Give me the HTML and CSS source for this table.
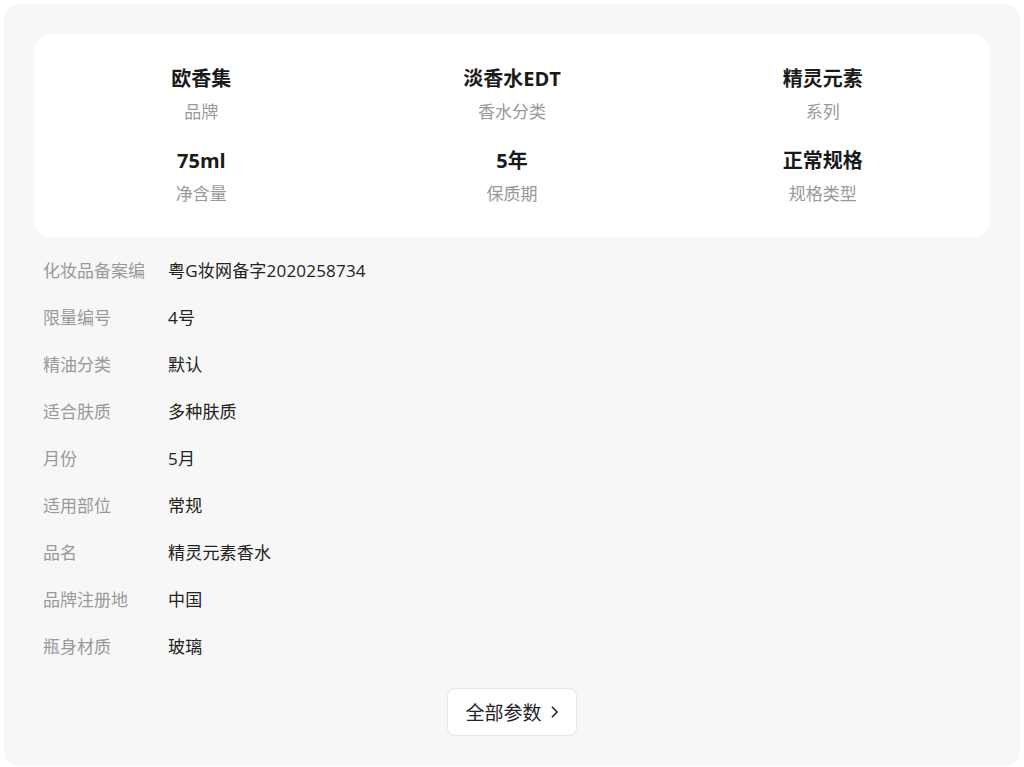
FILE: index.html
```html
<!DOCTYPE html>
<html lang="zh-CN">
<head>
    <meta charset="UTF-8">
    <meta name="viewport" content="width=device-width, initial-scale=1.0">
    <title>商品参数</title>
    <link rel="stylesheet" href="styles.css">
</head>
<body>
<div class="panel">
    <div class="summary">
        <div class="summary-item">
            <div class="summary-value">欧香集</div>
            <div class="summary-label">品牌</div>
        </div>
        <div class="summary-item">
            <div class="summary-value">淡香水EDT</div>
            <div class="summary-label">香水分类</div>
        </div>
        <div class="summary-item">
            <div class="summary-value">精灵元素</div>
            <div class="summary-label">系列</div>
        </div>
        <div class="summary-item">
            <div class="summary-value">75ml</div>
            <div class="summary-label">净含量</div>
        </div>
        <div class="summary-item">
            <div class="summary-value">5年</div>
            <div class="summary-label">保质期</div>
        </div>
        <div class="summary-item">
            <div class="summary-value">正常规格</div>
            <div class="summary-label">规格类型</div>
        </div>
    </div>

    <div class="params">
        <div class="param-row"><span class="param-name">化妆品备案编</span><span class="param-value">粤G妆网备字2020258734</span></div>
        <div class="param-row"><span class="param-name">限量编号</span><span class="param-value">4号</span></div>
        <div class="param-row"><span class="param-name">精油分类</span><span class="param-value">默认</span></div>
        <div class="param-row"><span class="param-name">适合肤质</span><span class="param-value">多种肤质</span></div>
        <div class="param-row"><span class="param-name">月份</span><span class="param-value">5月</span></div>
        <div class="param-row"><span class="param-name">适用部位</span><span class="param-value">常规</span></div>
        <div class="param-row"><span class="param-name">品名</span><span class="param-value">精灵元素香水</span></div>
        <div class="param-row"><span class="param-name">品牌注册地</span><span class="param-value">中国</span></div>
        <div class="param-row"><span class="param-name">瓶身材质</span><span class="param-value">玻璃</span></div>
    </div>

    <div class="more">
        <button class="more-btn">全部参数
            <svg class="chevron" viewBox="0 0 10 16" width="9" height="14"><path d="M2 2l6 6-6 6" fill="none" stroke="#222" stroke-width="1.8"/></svg>
        </button>
    </div>
</div>
</body>
</html>
```

FILE: styles.css
```css
* {
    margin: 0;
    padding: 0;
    box-sizing: border-box;
}

body {
    font-family: "Open Sans", "Noto Sans CJK SC", sans-serif;
    background: #fff;
    padding: 4px;
    color: #222;
}

.panel {
    width: 1016px;
    background: #f7f7f7;
    border-radius: 14px;
    padding: 30px 30px 30px;
}

.summary {
    background: #fff;
    border-radius: 16px;
    padding: 32px 12px 32px;
    display: grid;
    grid-template-columns: repeat(3, 1fr);
    row-gap: 25px;
}

.summary-item {
    text-align: center;
}

.summary-value {
    font-size: 20px;
    font-weight: 700;
    line-height: 26px;
    color: #1a1a1a;
}

.summary-label {
    font-size: 17px;
    line-height: 22px;
    margin-top: 9px;
    color: #999;
}

.params {
    margin-top: 9px;
    padding-left: 9px;
}

.param-row {
    display: flex;
    height: 47px;
    align-items: center;
    font-size: 17px;
}

.param-name {
    width: 125px;
    color: #999;
}

.param-value {
    color: #222;
    letter-spacing: 0.2px;
}

.more {
    display: flex;
    justify-content: center;
    margin-top: 19px;
}

.more-btn {
    display: flex;
    align-items: center;
    gap: 8px;
    height: 48px;
    padding: 0 17px;
    background: #fff;
    border: 1px solid #e6e6e6;
    border-radius: 8px;
    font-family: inherit;
    font-size: 19px;
    color: #222;
}
```
